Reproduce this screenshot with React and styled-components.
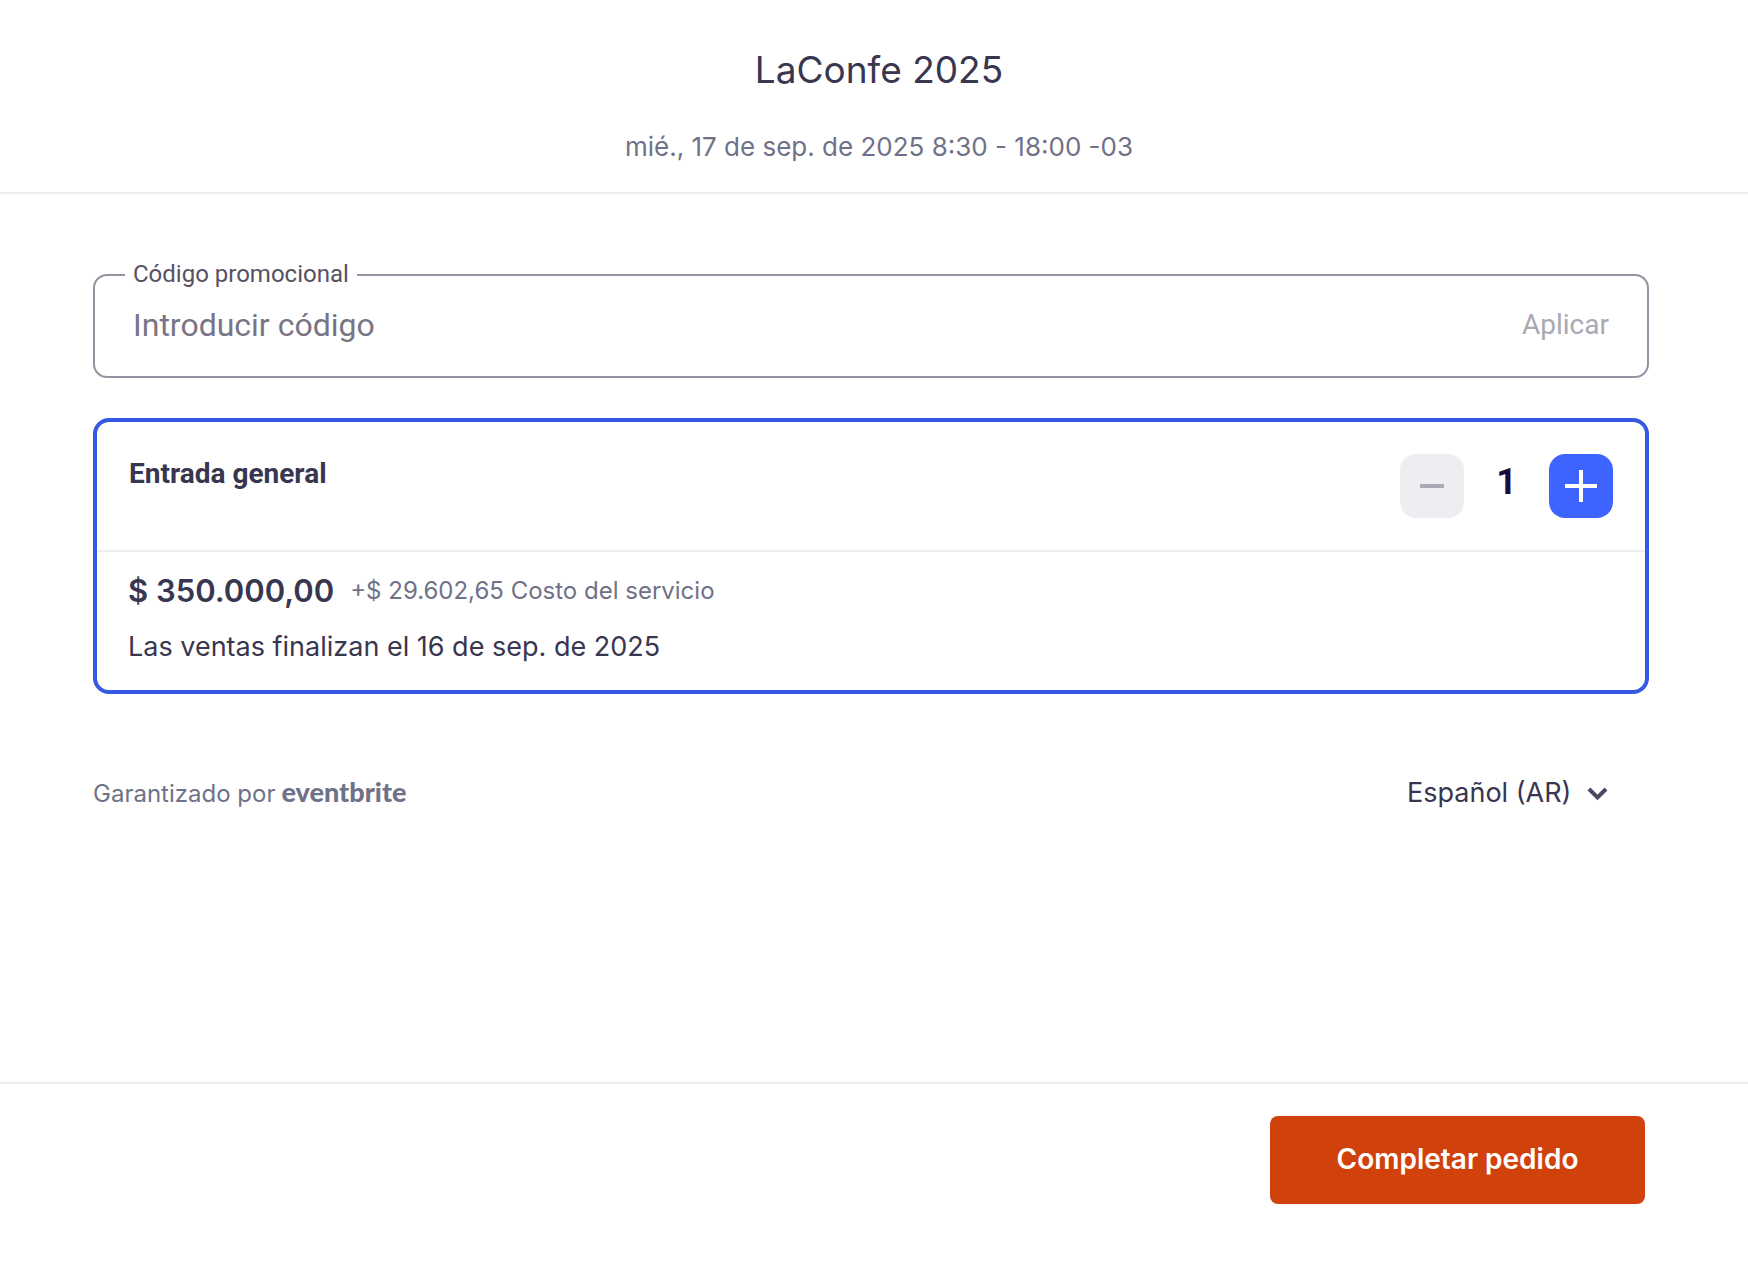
import React, { useState } from 'react';
import styled, { createGlobalStyle } from 'styled-components';

const GlobalStyles = createGlobalStyle`
  :root {
    --ink: #39364f;
    --darkInk: #1e0a3c;
    --grey: #6f7287;
    --lightGrey: #a9a8b3;
    --line: #eeedf2;
    --blue: #3d64ff;
    --cardBlue: #3659e3;
    --orange: #d1410c;
  }
  * {
    box-sizing: border-box;
  }
  body {
    margin: 0;
    background: #fff;
    color: var(--ink);
    font-family: Inter, 'Liberation Sans', sans-serif;
  }
  h1,
  h2,
  p {
    margin: 0;
    font-weight: 400;
  }
  button,
  input,
  select {
    font-family: inherit;
  }
`;

const PageStyles = styled.div`
  display: flex;
  flex-direction: column;
  min-height: 100vh;
`;

const HeaderStyles = styled.header`
  padding: 46px 40px 27px 50px;
  border-bottom: 2px solid var(--line);
  text-align: center;
  h1 {
    font-size: 37px;
    line-height: 48px;
    margin-bottom: 35px;
  }
  p {
    font-size: 26px;
    line-height: 36px;
    color: var(--grey);
  }
`;

const MainStyles = styled.main`
  flex: 1;
  padding: 80px 99px 40px 93px;
`;

const PromoStyles = styled.form`
  position: relative;
  display: flex;
  align-items: center;
  height: 104px;
  padding: 0 38px 2px;
  border: 2px solid #9592a1;
  border-radius: 14px;
  font-family: Roboto, sans-serif;
  label {
    position: absolute;
    top: -16px;
    left: 30px;
    padding: 0 8px;
    background: #fff;
    color: #585163;
    font-size: 24px;
    line-height: 28px;
  }
  input {
    flex: 1;
    min-width: 0;
    padding: 0;
    border: none;
    outline: none;
    color: var(--ink);
    font-size: 32px;
    line-height: 40px;
    &::placeholder {
      color: #787585;
      opacity: 1;
    }
  }
  button {
    padding: 0;
    border: none;
    background: none;
    color: var(--lightGrey);
    font-size: 28px;
    line-height: 36px;
  }
`;

const TicketStyles = styled.section`
  margin-top: 40px;
  border: 4px solid var(--cardBlue);
  border-radius: 16px;
  .ticket__top {
    display: flex;
    align-items: flex-start;
    justify-content: space-between;
    padding: 32px;
    border-bottom: 2px solid var(--line);
  }
  .ticket__name {
    font-family: Roboto, sans-serif;
    font-size: 28px;
    font-weight: 700;
    line-height: 40px;
  }
  .ticket__info {
    padding: 19px 31px 25px;
  }
  .ticket__prices {
    display: flex;
    align-items: center;
    gap: 16px;
    margin-bottom: 18px;
    line-height: 40px;
  }
  .ticket__price {
    font-size: 31px;
    font-weight: 600;
  }
  .ticket__fee {
    color: var(--grey);
    font-size: 24px;
  }
  .ticket__sales {
    font-size: 27px;
    line-height: 36px;
  }
`;

const StepperStyles = styled.div`
  display: flex;
  align-items: flex-start;
  output {
    width: 85px;
    color: var(--darkInk);
    font-family: Roboto, sans-serif;
    font-size: 36px;
    font-weight: 700;
    line-height: 56px;
    text-align: center;
  }
`;

const StepButton = styled.button`
  display: grid;
  place-items: center;
  width: 64px;
  height: 64px;
  padding: 0;
  border: none;
  border-radius: 16px;
  background: ${({ $active }) => ($active ? 'var(--blue)' : '#eeedf2')};
  color: ${({ $active }) => ($active ? '#fff' : 'var(--lightGrey)')};
  cursor: ${({ $active }) => ($active ? 'pointer' : 'default')};
`;

const BottomStyles = styled.div`
  display: flex;
  align-items: center;
  justify-content: space-between;
  margin-top: 74px;
`;

const PoweredBy = styled.p`
  display: flex;
  align-items: baseline;
  gap: 6px;
  color: var(--grey);
  font-size: 24px;
  line-height: 48px;
  a {
    color: var(--grey);
    font-family: Lato, sans-serif;
    font-size: 27px;
    font-weight: 900;
    text-decoration: none;
  }
`;

const LanguageStyles = styled.div`
  position: relative;
  margin-right: 40px;
  select {
    appearance: none;
    height: 48px;
    padding: 0 37px 2px 0;
    border: none;
    background: none;
    color: var(--ink);
    font-size: 27px;
  }
  svg {
    position: absolute;
    top: 18px;
    right: 0;
    pointer-events: none;
  }
`;

const FooterStyles = styled.footer`
  display: flex;
  justify-content: flex-end;
  padding: 32px 103px 76px;
  border-top: 2px solid var(--line);
`;

const CheckoutButton = styled.button`
  min-width: 375px;
  height: 88px;
  padding: 0 64px 2px;
  border: none;
  border-radius: 8px;
  background: var(--orange);
  color: #fff;
  font-size: 28px;
  font-weight: 600;
  cursor: pointer;
`;

const PromoCode = () => (
  <PromoStyles onSubmit={(e) => e.preventDefault()}>
    <label htmlFor="promo">Código promocional</label>
    <input id="promo" type="text" placeholder="Introducir código" />
    <button type="submit" disabled>
      Aplicar
    </button>
  </PromoStyles>
);

const Stepper = () => {
  const [count, setCount] = useState(1);
  return (
    <StepperStyles>
      <StepButton
        type="button"
        aria-label="Quitar"
        $active={count > 1}
        disabled={count <= 1}
        onClick={() => setCount(count - 1)}
      >
        <svg width="24" height="4" viewBox="0 0 24 4">
          <path d="M0 2h24" stroke="currentColor" strokeWidth="4" />
        </svg>
      </StepButton>
      <output>{count}</output>
      <StepButton
        type="button"
        aria-label="Agregar"
        $active
        onClick={() => setCount(count + 1)}
      >
        <svg width="32" height="32" viewBox="0 0 32 32">
          <path d="M0 16h32M16 0v32" stroke="currentColor" strokeWidth="4" />
        </svg>
      </StepButton>
    </StepperStyles>
  );
};

const Ticket = () => (
  <TicketStyles>
    <div className="ticket__top">
      <h2 className="ticket__name">Entrada general</h2>
      <Stepper />
    </div>
    <div className="ticket__info">
      <div className="ticket__prices">
        <span className="ticket__price">$ 350.000,00</span>
        <span className="ticket__fee">+$ 29.602,65 Costo del servicio</span>
      </div>
      <p className="ticket__sales">
        Las ventas finalizan el 16 de sep. de 2025
      </p>
    </div>
  </TicketStyles>
);

const App = () => (
  <PageStyles>
    <GlobalStyles />
    <HeaderStyles>
      <h1>LaConfe 2025</h1>
      <p>mié., 17 de sep. de 2025 8:30 - 18:00 -03</p>
    </HeaderStyles>
    <MainStyles>
      <PromoCode />
      <Ticket />
      <BottomStyles>
        <PoweredBy>
          Garantizado por <a href="#eventbrite">eventbrite</a>
        </PoweredBy>
        <LanguageStyles>
          <select aria-label="Idioma">
            <option>Español (AR)</option>
          </select>
          <svg width="22" height="14" viewBox="0 0 22 14" fill="none">
            <path d="M2 2l8.5 8.5L19 2" stroke="#4b4860" strokeWidth="4" />
          </svg>
        </LanguageStyles>
      </BottomStyles>
    </MainStyles>
    <FooterStyles>
      <CheckoutButton type="button">Completar pedido</CheckoutButton>
    </FooterStyles>
  </PageStyles>
);

export default App;
